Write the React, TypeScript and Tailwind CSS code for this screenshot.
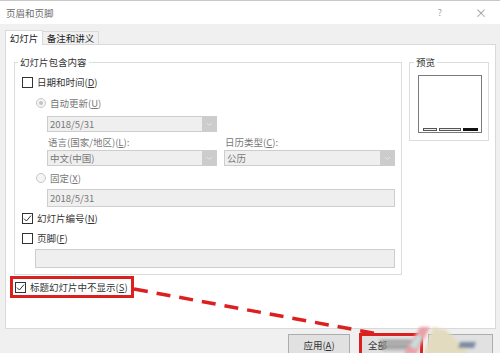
import React from "react";

const Check = ({ checked }: { checked?: boolean }) => (
  <span className="w-[11px] h-[11px] border border-[#333] bg-white flex items-center justify-center shrink-0">
    {checked && (
      <svg width="9" height="9" viewBox="0 0 9 9">
        <path d="M1 4.6 L3.4 7 L8 1.6" stroke="#333" fill="none" strokeWidth="1" />
      </svg>
    )}
  </span>
);

const Radio = ({ dot }: { dot?: boolean }) => (
  <span className="w-[10px] h-[10px] rounded-full border border-[#c9c9c9] bg-[#f4f4f4] flex items-center justify-center shrink-0">
    {dot && <span className="w-[4px] h-[4px] rounded-full bg-[#c4c4c4]" />}
  </span>
);

const Drop = ({ text, w }: { text: string; w: string }) => (
  <div className={`h-[16px] ${w} border border-[#cdcdcd] bg-[#efefef] flex`}>
    <span className="flex-1 pl-[2px] text-[#777] leading-[14px]">{text}</span>
    <span className="w-[14px] bg-[#cccccc] flex items-center justify-center">
      <svg width="7" height="5" viewBox="0 0 7 5">
        <path d="M1 1 L3.5 3.5 L6 1" stroke="#e4e4e4" fill="none" strokeWidth="1" />
      </svg>
    </span>
  </div>
);

export default function App() {
  return (
    <div
      className="w-[500px] h-[353px] overflow-hidden bg-[#f0f0f0] relative border-t border-[#c8c8c8] text-[9.5px] text-[#333]"
      style={{ fontFamily: '"Noto Sans CJK SC", "Noto Sans", sans-serif' }}
    >
      {/* title bar */}
      <div className="h-[23px] bg-white flex items-center pl-[6px] relative">
        <span className="text-[#6a6a6a] leading-[14px]">页眉和页脚</span>
        <span className="ml-auto mr-[33px] text-[#a0a0a0] text-[9px]">?</span>
        <span className="mr-[13px] text-[#a0a0a0] text-[12px] leading-[12px]">×</span>
      </div>

      {/* tabs */}
      <div className="flex items-end pl-[5px] mt-[6px] h-[15px] relative z-10">
        <div className="w-[38px] h-[15px] bg-white border-t border-l border-r border-[#d9d9d9] flex items-center justify-center leading-[12px] text-[#222]">
          幻灯片
        </div>
        <div className="w-[56px] h-[13px] bg-[#f0f0f0] border-t border-r border-[#d9d9d9] flex items-center justify-center leading-[12px] mb-[1px] text-[#222]">
          备注和讲义
        </div>
      </div>

      {/* panel */}
      <div className="ml-[5px] w-[491px] h-[285px] -mt-[1px] bg-white border border-[#d9d9d9] flex flex-col">
        <div className="flex items-start mt-[10px]">
          <fieldset className="ml-[8px] w-[388px] border border-[#dcdcdc] pl-[7px] pr-[6px] pb-[6px]">
            <legend className="-ml-[4px] px-[2px] leading-[14px] text-[#333]">幻灯片包含内容</legend>
            <div className="mt-[5px] h-[16px] flex items-center gap-[4px]">
              <Check />
              <span className="leading-[14px]">日期和时间(<u>D</u>)</span>
            </div>
            <div className="mt-[5px] h-[16px] flex items-center gap-[4px] ml-[14px] text-[#777]">
              <Radio dot />
              <span className="leading-[14px]">自动更新(<u>U</u>)</span>
            </div>
            <div className="mt-[5px] ml-[25px]">
              <Drop text="2018/5/31" w="w-[170px]" />
            </div>
            <div className="mt-[3px] h-[14px] ml-[26px] flex text-[#777] leading-[14px]">
              <span className="w-[177px]">语言(国家/地区)(<u>L</u>):</span>
              <span>日历类型(<u>C</u>):</span>
            </div>
            <div className="mt-[1px] ml-[25px] flex gap-[7px]">
              <Drop text="中文(中国)" w="w-[170px]" />
              <Drop text="公历" w="w-[171px]" />
            </div>
            <div className="mt-[4px] h-[16px] flex items-center gap-[4px] ml-[14px] text-[#777]">
              <Radio />
              <span className="leading-[14px]">固定(<u>X</u>)</span>
            </div>
            <div className="mt-[3px] ml-[25px] h-[18px] border border-[#cdcdcd] bg-[#efefef] pl-[2px] text-[#777] leading-[16px]">
              2018/5/31
            </div>
            <div className="mt-[3px] h-[16px] flex items-center gap-[4px]">
              <Check checked />
              <span className="leading-[14px]">幻灯片编号(<u>N</u>)</span>
            </div>
            <div className="mt-[4px] h-[16px] flex items-center gap-[4px]">
              <Check />
              <span className="leading-[14px]">页脚(<u>F</u>)</span>
            </div>
            <div className="mt-[3px] ml-[13px] h-[19px] border border-[#cdcdcd] bg-[#efefef]" />
          </fieldset>

          <fieldset className="ml-[7px] w-[80px] border border-[#dcdcdc] pl-[8px] pb-[7px]">
            <legend className="-ml-[4px] px-[2px] leading-[14px] text-[#333]">预览</legend>
            <div className="mt-[6px] w-[64px] h-[58px] border border-[#7a7a7a] bg-white flex items-end pl-[4px] pb-[1px] gap-[2px]">
              <span className="w-[14px] h-[3px] border border-[#555] bg-[#eee]" />
              <span className="w-[22px] h-[3px] border border-[#555] bg-[#eee]" />
              <span className="w-[15px] h-[3px] bg-[#111]" />
            </div>
          </fieldset>
        </div>

        <div className="ml-[4px] mt-[1px] w-[124px] h-[22px] border-[3px] border-[#dc1f1f] flex items-center pl-[2px] gap-[4px]">
          <Check checked />
          <span className="leading-[14px] whitespace-nowrap">标题幻灯片中不显示(<u>S</u>)</span>
        </div>
      </div>

      {/* bottom buttons */}
      <div className="flex items-start">
        <div className="ml-[288px] mt-[5px] w-[62px] h-[22px] bg-[#e1e1e1] border border-[#adadad] flex items-center justify-center leading-[14px]">
          应用(<u>A</u>)
        </div>
        <div className="ml-[9px] mt-[4px] w-[64px] h-[24px] border-[3px] border-[#dc1f1f] bg-[#e1e1e1] flex items-center pl-[6px] leading-[14px]">
          全部
        </div>
        <div className="ml-[5px] mt-[5px] w-[65px] h-[22px] bg-[#e1e1e1] border border-[#adadad]" />
      </div>

      {/* overlay annotations */}
      <svg className="absolute inset-0 pointer-events-none" width="500" height="353" viewBox="0 0 500 353">
        <defs>
          <filter id="blur" x="-20%" y="-20%" width="140%" height="140%">
            <feGaussianBlur stdDeviation="1.5" />
          </filter>
        </defs>
        <line x1="134" y1="288" x2="378" y2="333" stroke="#dc1f1f" strokeWidth="3.5" strokeDasharray="14 9" />
        <g filter="url(#blur)">
          <rect x="380" y="339" width="32" height="2" fill="#8a8a8a" />
          <rect x="380" y="342" width="34" height="2" fill="#9a9a9a" />
          <rect x="380" y="345" width="32" height="2" fill="#7f7f7f" />
          <rect x="382" y="348" width="30" height="1.5" fill="#aaa" />
          <polygon points="404,353 420,326 430,326 416,353" fill="#e9a1a8" />
          <polygon points="410,345 418,334 422,336 416,348" fill="#bfe3df" />
          <polygon points="424,353 433,326 446,329 470,353" fill="#e3dbbf" />
          <polygon points="460,341 476,341 474,347 458,347" fill="#7c8aa2" />
        </g>
      </svg>
    </div>
  );
}
